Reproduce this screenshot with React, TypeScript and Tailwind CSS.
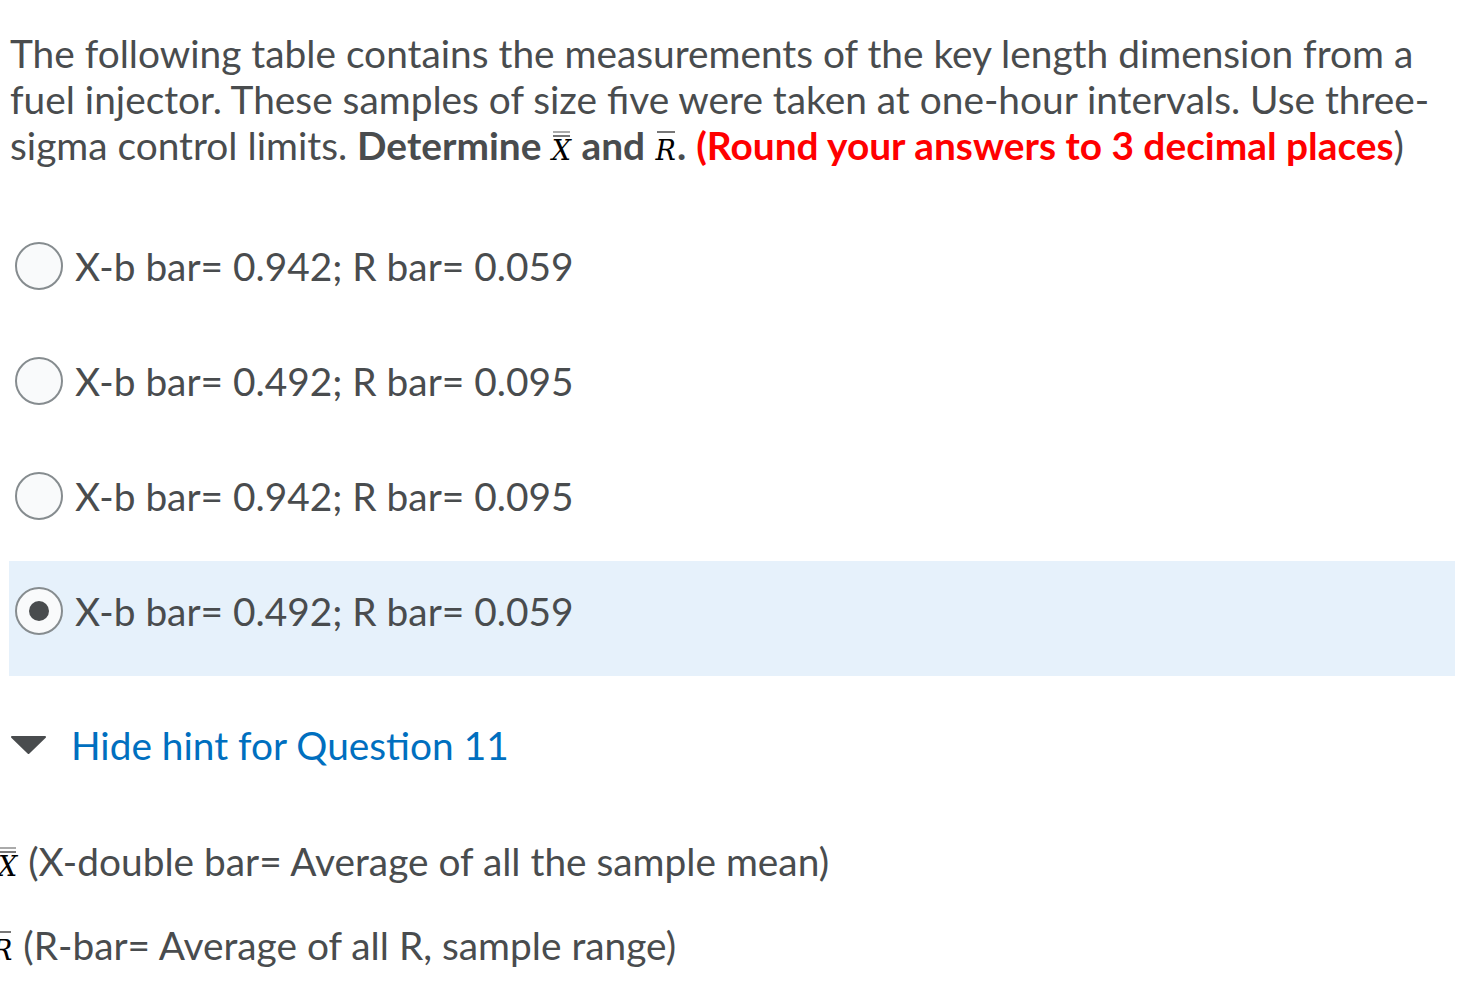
const options = [
  { id: 1, label: "X-b bar= 0.942; R bar= 0.059", selected: false },
  { id: 2, label: "X-b bar= 0.492; R bar= 0.095", selected: false },
  { id: 3, label: "X-b bar= 0.942; R bar= 0.095", selected: false },
  { id: 4, label: "X-b bar= 0.492; R bar= 0.059", selected: true },
];

// small equation images in the original, drawn as real text with bars on top
function BarSymbol({ letter, bars }: { letter: string; bars: number }) {
  return (
    <span className="relative inline-block px-[1px] font-['DejaVu_Serif',serif] text-[27px] font-normal italic leading-none text-black">
      {letter}
      <span className="absolute left-[2px] right-[2px] top-[-6px] flex flex-col gap-[2px]">
        {bars === 2 && <span className="block h-[2px] bg-[#aaa]" />}
        <span className="block h-[2px] bg-[#777]" />
      </span>
    </span>
  );
}

export default function App() {
  return (
    <div className="min-h-[988px] w-[1476px] overflow-hidden bg-white font-['Lato',sans-serif] text-[#494c4e]">
      <p className="px-[10px] pt-[30px] text-[38.85px] leading-[46px]">
        The following table contains the measurements of the key length dimension from a fuel injector. These samples of
        size five were taken at one-hour intervals. Use three-sigma control limits.{" "}
        <b className="font-bold">
          Determine <BarSymbol letter="X" bars={2} /> and <BarSymbol letter="R" bars={1} />.
        </b>{" "}
        <b className="font-bold text-[#ff0000]">(Round your answers to 3 decimal places</b>)
      </p>

      <div className="mt-[48px] flex flex-col pr-[21px]">
        {options.map((o) => (
          <label
            key={o.id}
            className={`flex h-[115px] items-start pt-[26px] ${o.selected ? "ml-[9px] bg-[#e6f1fb] pl-[6px]" : "pl-[15px]"}`}
          >
            <span className="flex items-center gap-[12px]">
              <span className="flex h-[48px] w-[48px] shrink-0 items-center justify-center rounded-full border-2 border-[#868c8f] bg-[#f9fafb]">
                {o.selected && <span className="h-[20px] w-[20px] rounded-full bg-[#494c4e]" />}
              </span>
              <span className="text-[38.85px] leading-[46px]">{o.label}</span>
            </span>
          </label>
        ))}
      </div>

      <div className="mt-[46px] flex items-center gap-[24px] pl-[10px]">
        <svg width="37" height="20" viewBox="0 0 37 20">
          <path d="M2 2 L35 2 L18.5 18 Z" fill="#494c4e" strokeLinejoin="round" stroke="#494c4e" strokeWidth="2" />
        </svg>
        <span className="text-[38.85px] leading-[46px] text-[#006fbf]">Hide hint for Question 11</span>
      </div>

      <div className="mt-[70px] text-[38.85px] leading-[46px]">
        <p className="-ml-[3px]">
          <BarSymbol letter="X" bars={2} /> (X-double bar= Average of all the sample mean)
        </p>
        <p className="mt-[38px] -ml-[9px]">
          <BarSymbol letter="R" bars={1} /> (R-bar= Average of all R, sample range)
        </p>
      </div>
    </div>
  );
}
